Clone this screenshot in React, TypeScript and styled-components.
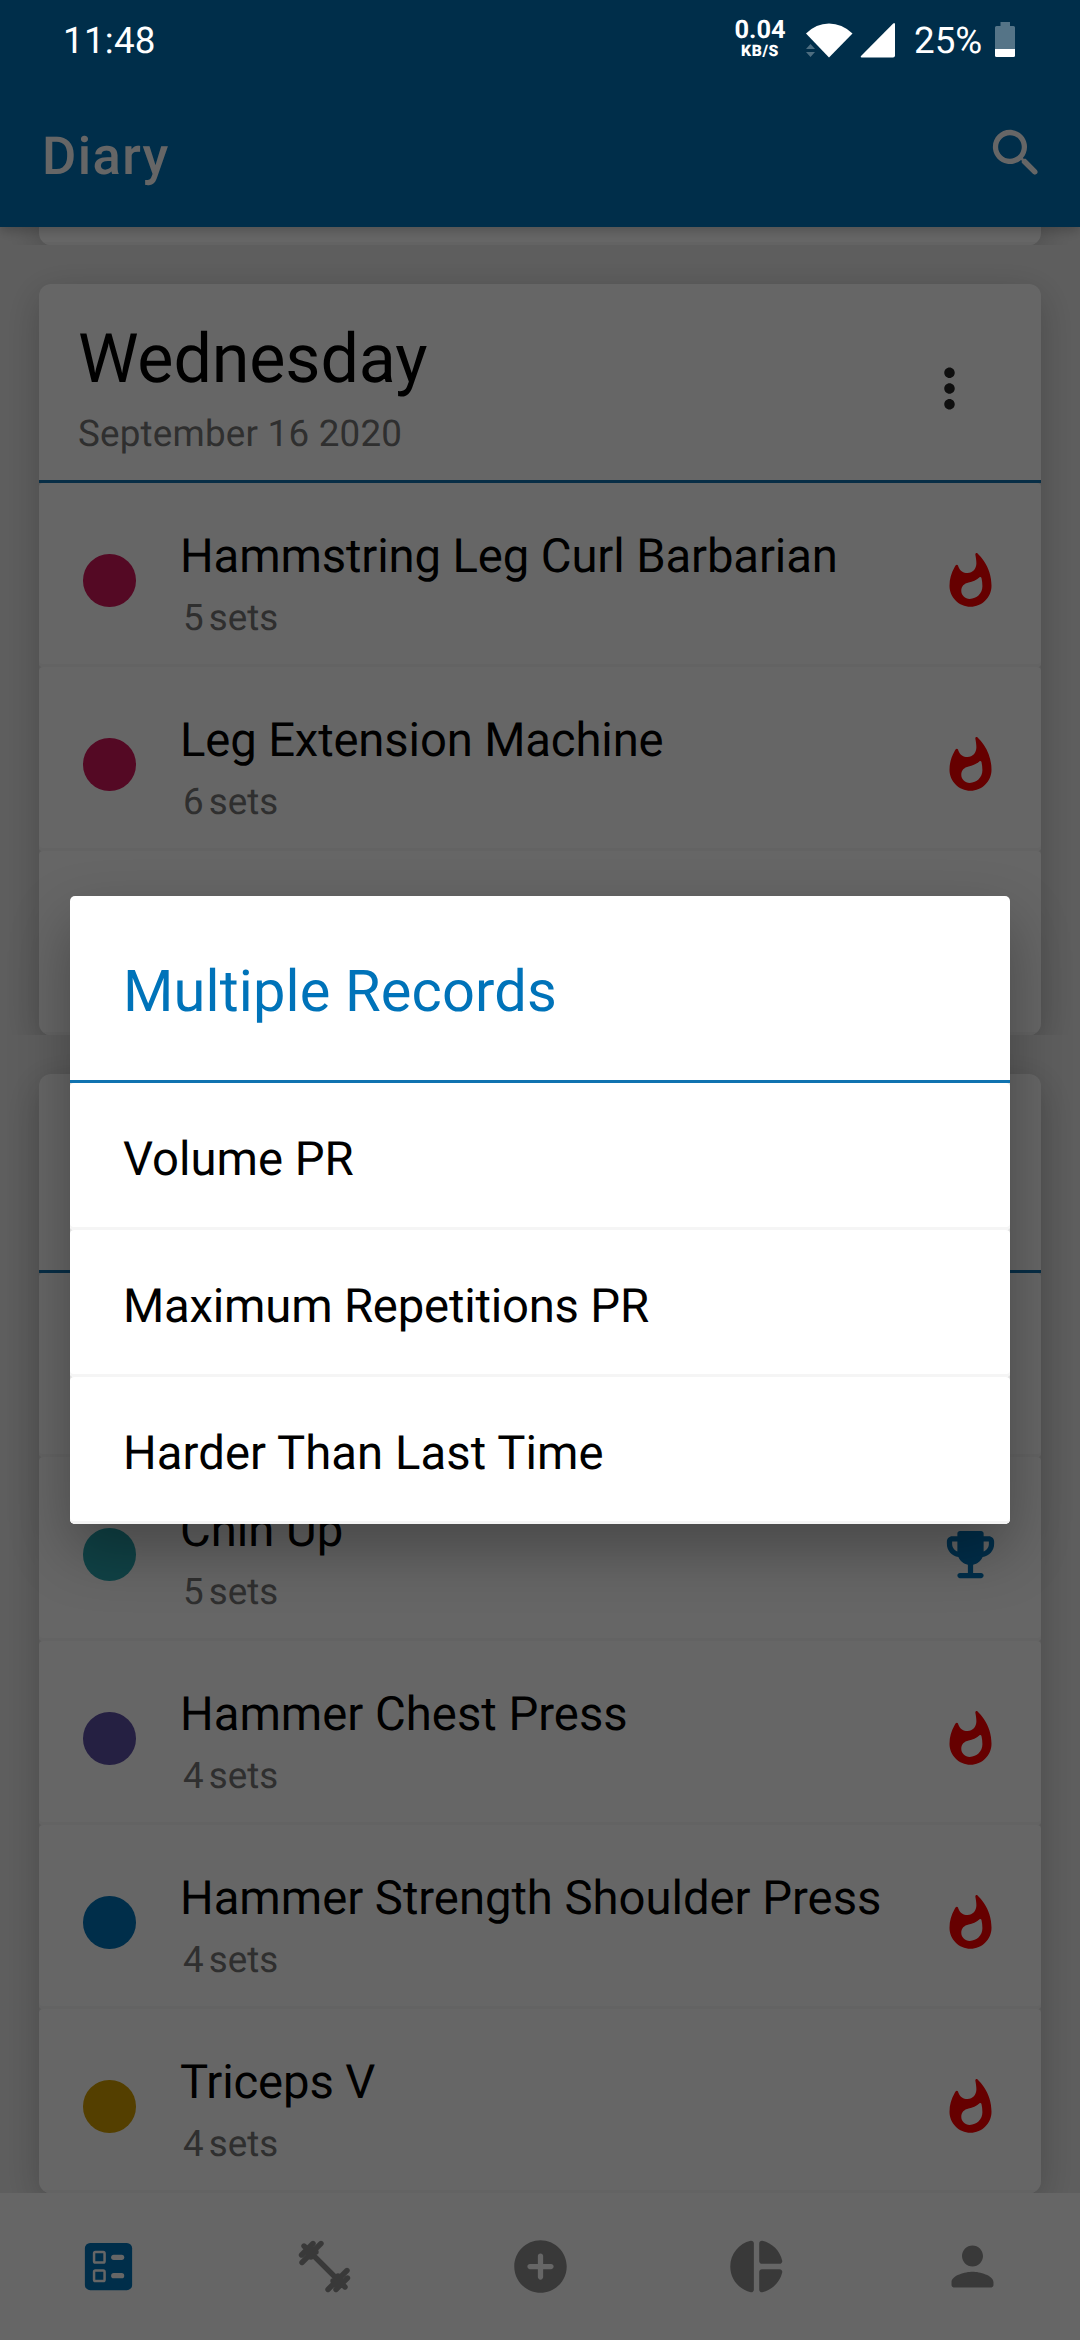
import React from "react";
import styled, { createGlobalStyle } from "styled-components";

const BLUE = "#0073b9";

const GlobalStyle = createGlobalStyle`
  body {
    margin: 0;
    background: #fff;
    font-family: Roboto, "Liberation Sans", sans-serif;
    text-rendering: geometricPrecision;
  }
`;

const Screen = styled.div`
  position: relative;
  width: 1080px;
  height: 2340px;
  overflow: hidden;
  display: flex;
  flex-direction: column;
  background: #ececec;
`;

/* ---------- app bar ---------- */

const AppBar = styled.header`
  position: relative;
  z-index: 1;
  flex: none;
  box-sizing: border-box;
  height: 227px;
  padding: 80px 32px 0 42px;
  display: flex;
  align-items: center;
  justify-content: space-between;
  background: ${BLUE};
  color: #fff;
  box-shadow: 0 4px 10px rgba(0, 0, 0, 0.2);
`;

const AppTitle = styled.h1`
  margin: 4px 0 0;
  font-size: 52.5px;
  line-height: 64px;
  font-weight: 500;
  letter-spacing: 1.4px;
`;

/* ---------- diary list ---------- */

const DiaryList = styled.main`
  flex: 1;
  min-height: 0;
  overflow: hidden;
  display: flex;
  flex-direction: column;
`;

const Day = styled.section`
  flex: none;
  overflow: hidden;
  padding: 39px 39px 0;
`;

const PreviousDay = styled.section`
  flex: none;
  height: 18px;
  overflow: hidden;
  padding: 0 39px;
  display: flex;
  flex-direction: column;
  justify-content: flex-end;
`;

const Card = styled.article`
  flex: none;
  border-radius: 12px;
  overflow: hidden;
  background: #fff;
  box-shadow: 0 10px 38px rgba(0, 0, 0, 0.22);
`;

const CardEnd = styled.div`
  height: 60px;
  box-shadow: inset 0 -3px #f7f7f7;
`;

const CardHeader = styled.header`
  box-sizing: border-box;
  height: 199px;
  padding: 35px 60px 0 39px;
  border-bottom: 3px solid #1673af;
  display: flex;
  justify-content: space-between;
`;

const DayName = styled.h2`
  margin: 0;
  font-size: 68.25px;
  line-height: 80px;
  font-weight: 400;
  letter-spacing: -0.15px;
  color: #000;
`;

const DayDate = styled.p`
  margin: 13px 0 0;
  font-size: 36.75px;
  line-height: 44px;
  letter-spacing: 0.22px;
  color: #757575;
`;

const MenuButton = styled.span`
  margin-top: 38px;
  height: 63px;
`;

const Rows = styled.div`
  background: #e0e0e0;
`;

const Row = styled.div`
  box-sizing: border-box;
  height: 184px;
  padding: 11px 39px 0 44px;
  display: flex;
  align-items: center;
  background: #fff;
  border-radius: 4px;
  box-shadow: inset 0 -3px #f7f7f7;
`;

const Dot = styled.span<{ $color: string }>`
  flex: none;
  width: 52.5px;
  height: 52.5px;
  border-radius: 50%;
  background: ${(p) => p.$color};
`;

const RowText = styled.div`
  flex: 1;
  padding: 7px 0 0 44.5px;
`;

const ExerciseName = styled.div<{ $tracking: number }>`
  font-size: 47.25px;
  line-height: 56px;
  letter-spacing: ${(p) => p.$tracking}px;
  color: #000;
  white-space: nowrap;
`;

const SetCount = styled.div`
  margin-top: 12px;
  padding-left: 3px;
  font-size: 36.75px;
  line-height: 44px;
  word-spacing: -4px;
  color: #757575;
`;

/* ---------- bottom navigation ---------- */

const BottomNav = styled.nav`
  flex: none;
  height: 147px;
  display: flex;
  background: #fff;
`;

const NavItem = styled.span<{ $active?: boolean }>`
  flex: 1;
  display: flex;
  align-items: center;
  justify-content: center;
  color: ${(p) => (p.$active ? BLUE : "#909090")};
`;

/* ---------- overlay ---------- */

const Scrim = styled.div`
  position: absolute;
  inset: 0;
  z-index: 2;
  box-sizing: border-box;
  padding-top: 80px;
  display: flex;
  align-items: center;
  justify-content: center;
  background: rgba(0, 0, 0, 0.6);
`;

const Dialog = styled.div`
  width: 940px;
  border-radius: 5px;
  overflow: hidden;
  background: #fff;
  box-shadow: 0 26px 60px rgba(0, 0, 0, 0.3);
`;

const DialogTitle = styled.h2`
  box-sizing: border-box;
  height: 187px;
  margin: 0;
  padding: 62px 53px 0;
  border-bottom: 3px solid #1073b0;
  font-size: 57.75px;
  line-height: 68px;
  font-weight: 400;
  letter-spacing: 0.15px;
  color: ${BLUE};
`;

const DialogRow = styled.div<{ $tracking: number }>`
  box-sizing: border-box;
  height: 147px;
  padding: 48px 53px 0;
  border-radius: 4px;
  background: #fff;
  box-shadow: inset 0 -3px #f5f5f5;
  font-size: 47.25px;
  line-height: 56px;
  letter-spacing: ${(p) => p.$tracking}px;
  color: #000;
`;

/* ---------- status bar ---------- */

const StatusBar = styled.div`
  position: absolute;
  z-index: 3;
  top: 0;
  left: 0;
  right: 0;
  height: 80px;
  box-sizing: border-box;
  padding: 0 65px 0 63px;
  display: flex;
  color: #fff;
`;

const StatusText = styled.span`
  margin-top: 19px;
  font-size: 36.75px;
  line-height: 44px;
`;

const Clock = styled(StatusText)`
  letter-spacing: 0.25px;
`;

const StatusIcons = styled.div`
  margin-left: auto;
  display: flex;
  align-items: flex-start;
`;

const Speed = styled.div`
  width: 60px;
  padding-top: 15px;
  text-align: center;
  font-weight: 700;
`;

const SpeedValue = styled.div`
  font-size: 25.4px;
  line-height: 30px;
`;

const SpeedUnit = styled.div`
  margin-top: -4px;
  font-size: 15.7px;
  line-height: 20px;
  font-weight: 900;
  letter-spacing: 0.6px;
`;

const StatusGlyph = styled.svg<{ $gap: number }>`
  display: block;
  flex: none;
  margin-left: ${(p) => p.$gap}px;
`;

const Percent = styled(StatusText)`
  width: 82px;
  margin-left: 17px;
`;

const IconSvg = styled.svg`
  display: block;
  flex: none;
  width: 63px;
  height: 63px;
  fill: currentColor;
`;

const Icon = ({ d, color }: { d: string; color?: string }) => (
  <IconSvg viewBox="0 0 24 24" color={color}>
    <path d={d} />
  </IconSvg>
);

const paths = {
  search:
    "M15.5 14h-.79l-.28-.27c1.2-1.4 1.82-3.31 1.48-5.34-.47-2.78-2.79-5-5.59-5.34-4.23-.52-7.79 3.04-7.27 7.27.34 2.8 2.56 5.12 5.34 5.59 2.03.34 3.94-.28 5.34-1.48l.27.28v.79l4.25 4.25c.41.41 1.08.41 1.49 0 .41-.41.41-1.08 0-1.49L15.5 14zm-6 0C7.01 14 5 11.99 5 9.5S7.01 5 9.5 5 14 7.01 14 9.5 11.99 14 9.5 14z",
  more: "M12 8c1.1 0 2-.9 2-2s-.9-2-2-2-2 .9-2 2 .9 2 2 2zm0 2c-1.1 0-2 .9-2 2s.9 2 2 2 2-.9 2-2-.9-2-2-2zm0 6c-1.1 0-2 .9-2 2s.9 2 2 2 2-.9 2-2-.9-2-2-2z",
  flame:
    "M17.09 4.56c-.7-1.03-1.5-1.99-2.4-2.85-.35-.34-.94-.02-.84.46.19.94.39 2.18.39 3.29 0 2.06-1.35 3.73-3.41 3.73-1.54 0-2.8-.93-3.35-2.26-.1-.2-.14-.32-.2-.54-.11-.42-.66-.55-.9-.18-.18.27-.35.54-.51.83C4.68 9.08 4 11.46 4 14c0 4.42 3.58 8 8 8s8-3.58 8-8c0-3.49-1.08-6.73-2.91-9.44zM11.71 19c-1.78 0-3.22-1.4-3.22-3.14 0-1.62 1.05-2.76 2.81-3.12 1.47-.3 2.98-.94 4.06-1.92.28-.26.74-.14.82.23.23 1.02.35 2.08.35 3.15.01 2.65-2.14 4.8-4.82 4.8z",
  trophy:
    "M19 5h-2V4c0-.55-.45-1-1-1H8c-.55 0-1 .45-1 1v1H5c-1.1 0-2 .9-2 2v1c0 2.55 1.92 4.63 4.39 4.94.63 1.5 1.98 2.63 3.61 2.96V19H8c-.55 0-1 .45-1 1s.45 1 1 1h8c.55 0 1-.45 1-1s-.45-1-1-1h-3v-3.1c1.63-.33 2.98-1.46 3.61-2.96C19.08 12.63 21 10.55 21 8V7c0-1.1-.9-2-2-2zM5 8V7h2v3.82C5.84 10.4 5 9.3 5 8zm14 0c0 1.3-.84 2.4-2 2.82V7h2v1z",
  add: "M12 2C6.48 2 2 6.48 2 12s4.48 10 10 10 10-4.48 10-10S17.52 2 12 2zm4 11h-3v3c0 .55-.45 1-1 1s-1-.45-1-1v-3H8c-.55 0-1-.45-1-1s.45-1 1-1h3V8c0-.55.45-1 1-1s1 .45 1 1v3h3c.55 0 1 .45 1 1s-.45 1-1 1z",
  pie: "M11 3.18v17.64c0 .64-.59 1.12-1.21.98C5.32 20.8 2 16.79 2 12s3.32-8.8 7.79-9.8c.62-.14 1.21.34 1.21.98zm2.03 0v6.81c0 .55.45 1 1 1h6.79c.64 0 1.12-.59.98-1.22-.85-3.76-3.8-6.72-7.55-7.57-.63-.14-1.22.34-1.22.98zm0 10.83v6.81c0 .64.59 1.12 1.22.98 3.76-.85 6.71-3.82 7.56-7.58.14-.62-.35-1.22-.98-1.22h-6.79c-.56.01-1.01.46-1.01 1.01z",
  person:
    "M12 12c2.21 0 4-1.79 4-4s-1.79-4-4-4-4 1.79-4 4 1.79 4 4 4zm0 2c-2.67 0-8 1.34-8 4v1c0 .55.45 1 1 1h14c.55 0 1-.45 1-1v-1c0-2.66-5.33-4-8-4z",
};

const BallotIcon = () => (
  <IconSvg viewBox="0 0 24 24">
    <rect x="3" y="3" width="18" height="18" rx="2" />
    <g fill="none" stroke="#fff" strokeWidth="0.95">
      <rect x="6.5" y="6.5" width="4" height="4" rx="0.5" />
      <rect x="6.5" y="13.5" width="4" height="4" rx="0.5" />
    </g>
    <g fill="#fff">
      <rect x="13" y="7.5" width="5" height="2" rx="1" />
      <rect x="13" y="14.5" width="5" height="2" rx="1" />
    </g>
  </IconSvg>
);

const DumbbellIcon = () => (
  <IconSvg viewBox="2 3 63 63">
    <path
      d="M13 14L54 55M30 11.5L11 30.5M22 11.5L10.500 23M37 57.500L56 38.500M45 57.500L56.500 46M16 20L25 20M20 14L20 25M51 49L42 49M47 55L47 44"
      fill="none"
      stroke="currentColor"
      strokeWidth="5.4"
      strokeLinecap="round"
    />
  </IconSvg>
);

type Award = "flame" | "trophy";
interface Exercise {
  name: string;
  sets: number;
  color: string;
  award?: Award;
  tracking?: number;
}

const wednesday: Exercise[] = [
  { name: "Hammstring Leg Curl Barbarian", sets: 5, color: "#d2175a", award: "flame", tracking: -0.13 },
  { name: "Leg Extension Machine", sets: 6, color: "#d2175a", award: "flame", tracking: -0.15 },
];

const earlier: Exercise[] = [
  { name: "Chin Up", sets: 5, color: "#2aa5b0", award: "trophy" },
  { name: "Hammer Chest Press", sets: 4, color: "#5e50a6", award: "flame" },
  { name: "Hammer Strength Shoulder Press", sets: 4, color: BLUE, award: "flame", tracking: -0.03 },
  { name: "Triceps V", sets: 4, color: "#d29e00", award: "flame", tracking: -0.15 },
];

const records = [
  { label: "Volume PR", tracking: 0 },
  { label: "Maximum Repetitions PR", tracking: -0.2 },
  { label: "Harder Than Last Time", tracking: 0.07 },
];

const awardColor: Record<Award, string> = { flame: "#ff0000", trophy: BLUE };

const ExerciseRow = ({ name, sets, color, award, tracking = 0 }: Exercise) => (
  <Row>
    <Dot $color={color} />
    <RowText>
      <ExerciseName $tracking={tracking}>{name}</ExerciseName>
      <SetCount>{sets} sets</SetCount>
    </RowText>
    {award && <Icon d={paths[award]} color={awardColor[award]} />}
  </Row>
);

export default function App() {
  return (
    <>
      <GlobalStyle />
      <Screen>
        <AppBar>
          <AppTitle>Diary</AppTitle>
          <Icon d={paths.search} />
        </AppBar>

        <DiaryList>
          <PreviousDay>
            <Card>
              <CardEnd />
            </Card>
          </PreviousDay>
          <Day>
            <Card>
              <CardHeader>
                <div>
                  <DayName>Wednesday</DayName>
                  <DayDate>September 16 2020</DayDate>
                </div>
                <MenuButton>
                  <Icon d={paths.more} color="#262626" />
                </MenuButton>
              </CardHeader>
              <Rows>
                {wednesday.map((e) => (
                  <ExerciseRow key={e.name} {...e} />
                ))}
                <Row />
              </Rows>
            </Card>
          </Day>
          <Day>
            <Card>
              <CardHeader />
              <Rows>
                <Row />
                {earlier.map((e) => (
                  <ExerciseRow key={e.name} {...e} />
                ))}
              </Rows>
            </Card>
          </Day>
        </DiaryList>

        <BottomNav>
          <NavItem $active>
            <BallotIcon />
          </NavItem>
          <NavItem>
            <DumbbellIcon />
          </NavItem>
          <NavItem>
            <Icon d={paths.add} />
          </NavItem>
          <NavItem>
            <Icon d={paths.pie} />
          </NavItem>
          <NavItem>
            <Icon d={paths.person} />
          </NavItem>
        </BottomNav>

        <Scrim>
          <Dialog role="dialog">
            <DialogTitle>Multiple Records</DialogTitle>
            <Rows>
              {records.map((r) => (
                <DialogRow key={r.label} $tracking={r.tracking}>
                  {r.label}
                </DialogRow>
              ))}
            </Rows>
          </Dialog>
        </Scrim>

        <StatusBar>
          <Clock>11:48</Clock>
          <StatusIcons>
            <Speed>
              <SpeedValue>0.04</SpeedValue>
              <SpeedUnit>KB/S</SpeedUnit>
            </Speed>
            <StatusGlyph $gap={14} width="50" height="60" viewBox="804 0 50 60">
              <path d="M806 33.500Q816 23.500 829 23.500T852.500 33.500L829 57.500Z" fill="#fff" />
              <path d="M810.500 44l4.500 5h-9zM806 52h9l-4.500 5z" fill="#4d6d80" />
            </StatusGlyph>
            <StatusGlyph $gap={6} width="37" height="60" viewBox="860 0 37 60">
              <path d="M893.200 23.500Q895 22 895 24.500V55.500Q895 57.500 893 57.500H861.500Q860 57.200 861 56Z" fill="#fff" />
            </StatusGlyph>
            <Percent>25%</Percent>
            <StatusGlyph $gap={-1} width="20" height="60" viewBox="995 0 20 60">
              <path d="M1000.500 22h9.500v4h3.500q1.500 0 1.500 1.500V49h-20V27.500q0-1.500 1.500-1.500h4z" fill="#557487" />
              <path d="M995 49h20v6.500q0 1.500-1.500 1.500h-17q-1.500 0-1.500-1.500z" fill="#fff" />
            </StatusGlyph>
          </StatusIcons>
        </StatusBar>
      </Screen>
    </>
  );
}
